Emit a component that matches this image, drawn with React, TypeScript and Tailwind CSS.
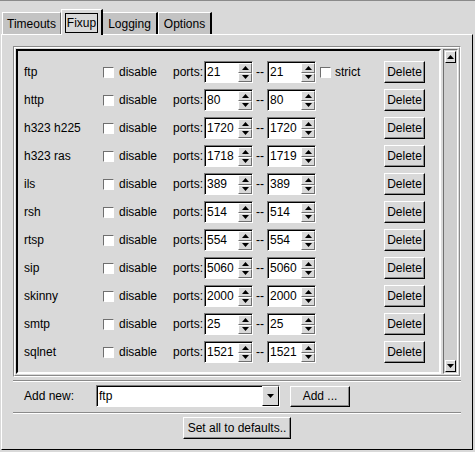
import React from 'react';

const rows: { name: string; a: string; b: string; strict?: boolean }[] = [
  { name: 'ftp', a: '21', b: '21', strict: true },
  { name: 'http', a: '80', b: '80' },
  { name: 'h323 h225', a: '1720', b: '1720' },
  { name: 'h323 ras', a: '1718', b: '1719' },
  { name: 'ils', a: '389', b: '389' },
  { name: 'rsh', a: '514', b: '514' },
  { name: 'rtsp', a: '554', b: '554' },
  { name: 'sip', a: '5060', b: '5060' },
  { name: 'skinny', a: '2000', b: '2000' },
  { name: 'smtp', a: '25', b: '25' },
  { name: 'sqlnet', a: '1521', b: '1521' },
];

const Tri = ({ down = false, w = 7 }: { down?: boolean; w?: number }) => (
  <svg width={w} height={4} viewBox="0 0 7 4" className="block">
    {down ? <polygon points="0,0 7,0 3.5,4" fill="#000" /> : <polygon points="3.5,0 7,4 0,4" fill="#000" />}
  </svg>
);

const Check = () => (
  <div className="w-[11px] h-[11px] shrink-0 bg-white border border-t-[#6f6f6f] border-l-[#6f6f6f] border-r-white border-b-white" />
);

const Spin = ({ v }: { v: string }) => (
  <div className="flex h-[22px] w-[49px] shrink-0 border border-t-[#7a7a7a] border-l-[#7a7a7a] border-r-white border-b-white">
    <div className="flex-1 bg-white border-t border-l border-t-black border-l-black pl-[1px] leading-[19px]">{v}</div>
    <div className="w-[14px] flex flex-col bg-[#d9d9d9] border-t border-t-black">
      <div className="flex-1 flex items-center justify-center border border-t-white border-l-white border-r-[#6f6f6f] border-b-[#6f6f6f]">
        <Tri />
      </div>
      <div className="flex-1 flex items-center justify-center border border-t-white border-l-white border-r-[#6f6f6f] border-b-[#6f6f6f]">
        <Tri down />
      </div>
    </div>
  </div>
);

const Btn = ({ children, className = '' }: { children: React.ReactNode; className?: string }) => (
  <div
    className={`flex items-center justify-center shrink-0 bg-[#d9d9d9] border border-t-white border-l-white border-r-black border-b-black shadow-[inset_-1px_-1px_0_#8a8a8a] ${className}`}
  >
    {children}
  </div>
);

export default function App() {
  return (
    <div
      className="w-[475px] h-[452px] bg-[#d9d9d9] text-[12px] text-black border-t border-t-[#8a8a8a] pt-[8px] overflow-hidden"
      style={{ fontFamily: '"Liberation Sans", Arial, sans-serif' }}
    >
      {/* tabs */}
      <div className="flex items-end h-[25px] pl-[2px]">
        <div className="w-[59px] h-[22px] flex items-center justify-center bg-[#c3c3c3] border-t border-l border-t-white border-l-white border-r border-r-[#6f6f6f]">
          Timeouts
        </div>
        <div className="relative z-10 -mb-px w-[42px] h-[26px] flex items-center justify-center bg-[#d9d9d9] border-t border-l border-t-white border-l-white border-r-2 border-r-black">
          <span className="border border-black px-[1px] leading-[18px]">Fixup</span>
        </div>
        <div className="w-[55px] h-[22px] flex items-center justify-center bg-[#c3c3c3] border-t border-t-white border-r-2 border-r-black">
          Logging
        </div>
        <div className="w-[54px] h-[22px] flex items-center justify-center bg-[#c3c3c3] border-t border-l border-t-white border-l-white border-r-2 border-r-black">
          Options
        </div>
      </div>

      {/* panel */}
      <div className="ml-px w-[472px] h-[416px] border border-t-white border-l-white border-r-black border-b-black">
        {/* groove frame */}
        <div className="ml-[11px] mt-[11px] w-[448px] h-[331px] border border-t-[#8a8a8a] border-l-[#8a8a8a] border-r-white border-b-white">
          <div className="w-full h-full border border-t-white border-l-white border-r-[#8a8a8a] border-b-[#8a8a8a] p-px flex gap-[2px]">
            {/* list */}
            <div className="w-[425px] border-2 border-t-black border-l-black border-r-white border-b-white pt-[7px]">
              {rows.map((r) => (
                <div key={r.name} className="flex items-center h-[28px] pl-[6px]">
                  <div className="w-[79px] shrink-0">{r.name}</div>
                  <Check />
                  <div className="w-[59px] shrink-0 pl-[5px]">disable</div>
                  <div className="w-[31px] shrink-0">ports:</div>
                  <Spin v={r.a} />
                  <div className="w-[14px] shrink-0 text-center">--</div>
                  <Spin v={r.b} />
                  <div className="w-[68px] shrink-0 flex items-center pl-[4px]">
                    {r.strict && (
                      <>
                        <Check />
                        <span className="pl-[4px]">strict</span>
                      </>
                    )}
                  </div>
                  <Btn className="w-[41px] h-[22px]">Delete</Btn>
                </div>
              ))}
            </div>
            {/* scrollbar */}
            <div className="w-[15px] flex flex-col justify-between bg-[#cfcfcf] border border-t-[#6f6f6f] border-l-[#6f6f6f] border-r-white border-b-white p-px">
              <div className="h-[12px] flex items-center justify-center bg-[#d9d9d9] border border-t-white border-l-white border-r-black border-b-black">
                <Tri />
              </div>
              <div className="h-[12px] flex items-center justify-center bg-[#d9d9d9] border border-t-white border-l-white border-r-black border-b-black">
                <Tri down />
              </div>
            </div>
          </div>
        </div>

        {/* separator */}
        <div className="ml-[11px] mt-[3px] w-[448px] border-t border-b border-t-[#8a8a8a] border-b-white" />

        {/* add new */}
        <div className="ml-[11px] mt-[3px] w-[448px] h-[22px] flex items-center">
          <div className="w-[83px] shrink-0 pl-[11px]">Add new:</div>
          <div className="flex w-[184px] h-[22px] border border-t-[#7a7a7a] border-l-[#7a7a7a] border-r-white border-b-white">
            <div className="flex-1 bg-white border-t border-l border-t-black border-l-black pl-[1px] leading-[19px]">ftp</div>
            <div className="w-[17px] flex items-center justify-center bg-[#d9d9d9] border border-t-white border-l-white border-r-black border-b-black">
              <Tri down />
            </div>
          </div>
          <Btn className="ml-[10px] w-[60px] h-[21px]">Add ...</Btn>
        </div>

        {/* separator */}
        <div className="ml-[11px] mt-[5px] w-[448px] border-t border-b border-t-[#8a8a8a] border-b-white" />

        <div className="mt-[3px] flex justify-center">
          <Btn className="w-[108px] h-[22px]">Set all to defaults..</Btn>
        </div>
      </div>
    </div>
  );
}
